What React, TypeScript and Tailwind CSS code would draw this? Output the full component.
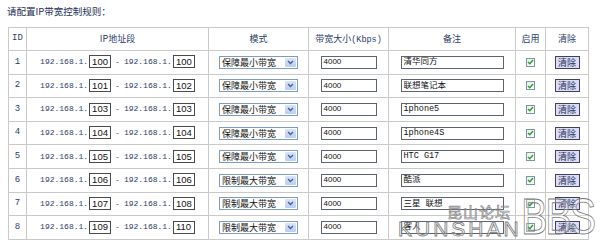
import React from "react";

type Row = { id: number; a: string; b: string; mode: string; note: string };

const rows: Row[] = [
  { id: 1, a: "100", b: "100", mode: "保障最小带宽", note: "清华同方" },
  { id: 2, a: "101", b: "102", mode: "保障最小带宽", note: "联想笔记本" },
  { id: 3, a: "103", b: "103", mode: "保障最小带宽", note: "iphone5" },
  { id: 4, a: "104", b: "104", mode: "保障最小带宽", note: "iphone4S" },
  { id: 5, a: "105", b: "105", mode: "保障最小带宽", note: "HTC G17" },
  { id: 6, a: "106", b: "106", mode: "限制最大带宽", note: "酷派" },
  { id: 7, a: "107", b: "108", mode: "限制最大带宽", note: "三星 联想" },
  { id: 8, a: "109", b: "110", mode: "限制最大带宽", note: "客人" },
];

const mono = "font-['Liberation_Mono','Noto_Sans_CJK_SC',monospace]";
const cjk = "font-['Noto_Sans_CJK_SC','Liberation_Sans',sans-serif]";

function IpBox({ v }: { v: string }) {
  return (
    <span className="inline-flex items-center h-[13px] w-[22px] border border-[#4a4a4a] bg-white pl-[2px] text-[9.5px] leading-none text-[#111] font-['Liberation_Sans',sans-serif]">
      {v}
    </span>
  );
}

function Select({ v }: { v: string }) {
  return (
    <span className="inline-flex items-stretch h-[13px] w-[79px] border border-[#7f9db9] bg-white">
      <span className={`flex-1 flex items-center pl-[2px] text-[9px] leading-none text-[#111] ${cjk}`}>{v}</span>
      <span className="w-[11px] my-[1px] mr-[1px] bg-gradient-to-b from-[#d9e4fc] to-[#b9cdf6] flex items-center justify-center rounded-[1px]">
        <svg width="7" height="5" viewBox="0 0 7 5">
          <path d="M1 1 L3.5 3.5 L6 1" stroke="#4b5f8a" strokeWidth="1.4" fill="none" />
        </svg>
      </span>
    </span>
  );
}

function Check() {
  return (
    <span className="inline-flex items-center justify-center w-[9px] h-[9px] border border-[#7b96ab] bg-gradient-to-br from-[#e6efe6] to-[#ffffff]">
      <svg width="7" height="6" viewBox="0 0 7 6">
        <path d="M1 3 L2.8 4.8 L6 1" stroke="#2f9a2f" strokeWidth="1.4" fill="none" />
      </svg>
    </span>
  );
}

export default function App() {
  const thBase = "border border-[#c9c9c9] h-[23px] text-center font-normal text-[9px] text-[#2b3d66]";
  const th = `${thBase} ${cjk}`;
  const td = "border border-[#c9c9c9] h-[23.6px] text-center align-middle p-0";
  return (
    <div className="relative w-[600px] h-[247px] bg-white overflow-hidden">
      <div className="pl-[7px] pt-[5px]">
        <div className={`h-[16px] text-[9.5px] leading-[12px] text-[#1e2f55] ${cjk}`}>请配置IP带宽控制规则：</div>
        <table className="mt-[6px] ml-[1px] border-collapse table-fixed w-[580px]">
          <colgroup>
            <col className="w-[18px]" />
            <col className="w-[182px]" />
            <col className="w-[100px]" />
            <col className="w-[80px]" />
            <col className="w-[127px]" />
            <col className="w-[30px]" />
            <col className="w-[43px]" />
          </colgroup>
          <thead>
            <tr>
              <th className={`${thBase} ${mono}`}>ID</th>
              <th className={th}>IP地址段</th>
              <th className={th}>模式</th>
              <th className={th}>
                带宽大小<span className={`${mono} text-[8.5px]`}>(Kbps)</span>
              </th>
              <th className={th}>备注</th>
              <th className={th}>启用</th>
              <th className={th}>清除</th>
            </tr>
          </thead>
          <tbody>
            {rows.map((r) => (
              <tr key={r.id}>
                <td className={`${td} text-[9px] text-[#2b3d66] ${mono}`}>{r.id}</td>
                <td className={td}>
                  <div className={`flex items-center justify-center text-[8px] text-[#2b3d66] ${mono}`}>
                    <span>192.168.1.</span>
                    <span className="ml-[1px]"><IpBox v={r.a} /></span>
                    <span className="mx-[4px]">-</span>
                    <span>192.168.1.</span>
                    <span className="ml-[1px]"><IpBox v={r.b} /></span>
                  </div>
                </td>
                <td className={td}>
                  <div className="flex justify-center">
                    <Select v={r.mode} />
                  </div>
                </td>
                <td className={td}>
                  <div className="flex justify-center">
                    <span className="inline-flex items-center h-[13px] w-[56px] border border-[#5c6470] bg-white pl-[2px] text-[8px] leading-none text-[#111] font-['Liberation_Sans',sans-serif]">
                      4000
                    </span>
                  </div>
                </td>
                <td className={td}>
                  <div className="flex justify-center">
                    <span className={`inline-flex items-center h-[13px] w-[103px] border border-[#5c6470] bg-white pl-[2px] text-[8.5px] leading-none text-[#111] ${mono}`}>
                      {r.note}
                    </span>
                  </div>
                </td>
                <td className={td}>
                  <div className="flex justify-center">
                    <Check />
                  </div>
                </td>
                <td className={td}>
                  <div className="flex justify-center">
                    <span className={`inline-flex items-center justify-center h-[13px] w-[25px] border border-[#3d4358] bg-[#dcdcf6] text-[9px] leading-none text-[#1e2f55] ${cjk}`}>
                      清除
                    </span>
                  </div>
                </td>
              </tr>
            ))}
          </tbody>
        </table>
      </div>
      {/* watermark */}
      <div className={`absolute left-[447px] top-[204px] text-[15px] leading-none tracking-[1px] text-transparent [-webkit-text-stroke:0.7px_#8a8a8a] ${cjk}`}>
        昆山论坛
      </div>
      <div className="absolute left-[398px] top-[218px] text-[21px] leading-none tracking-[3px] text-white/30 [-webkit-text-stroke:0.8px_#7a7a7a] font-['Liberation_Sans',sans-serif]">
        KUNSHAN
      </div>
      <div className="absolute left-[521px] top-[192px] text-[50px] leading-none tracking-[-3px] text-white/30 [-webkit-text-stroke:0.8px_#7a7a7a] font-['Liberation_Sans',sans-serif] scale-x-[0.8] origin-left">
        BBS
      </div>
    </div>
  );
}
